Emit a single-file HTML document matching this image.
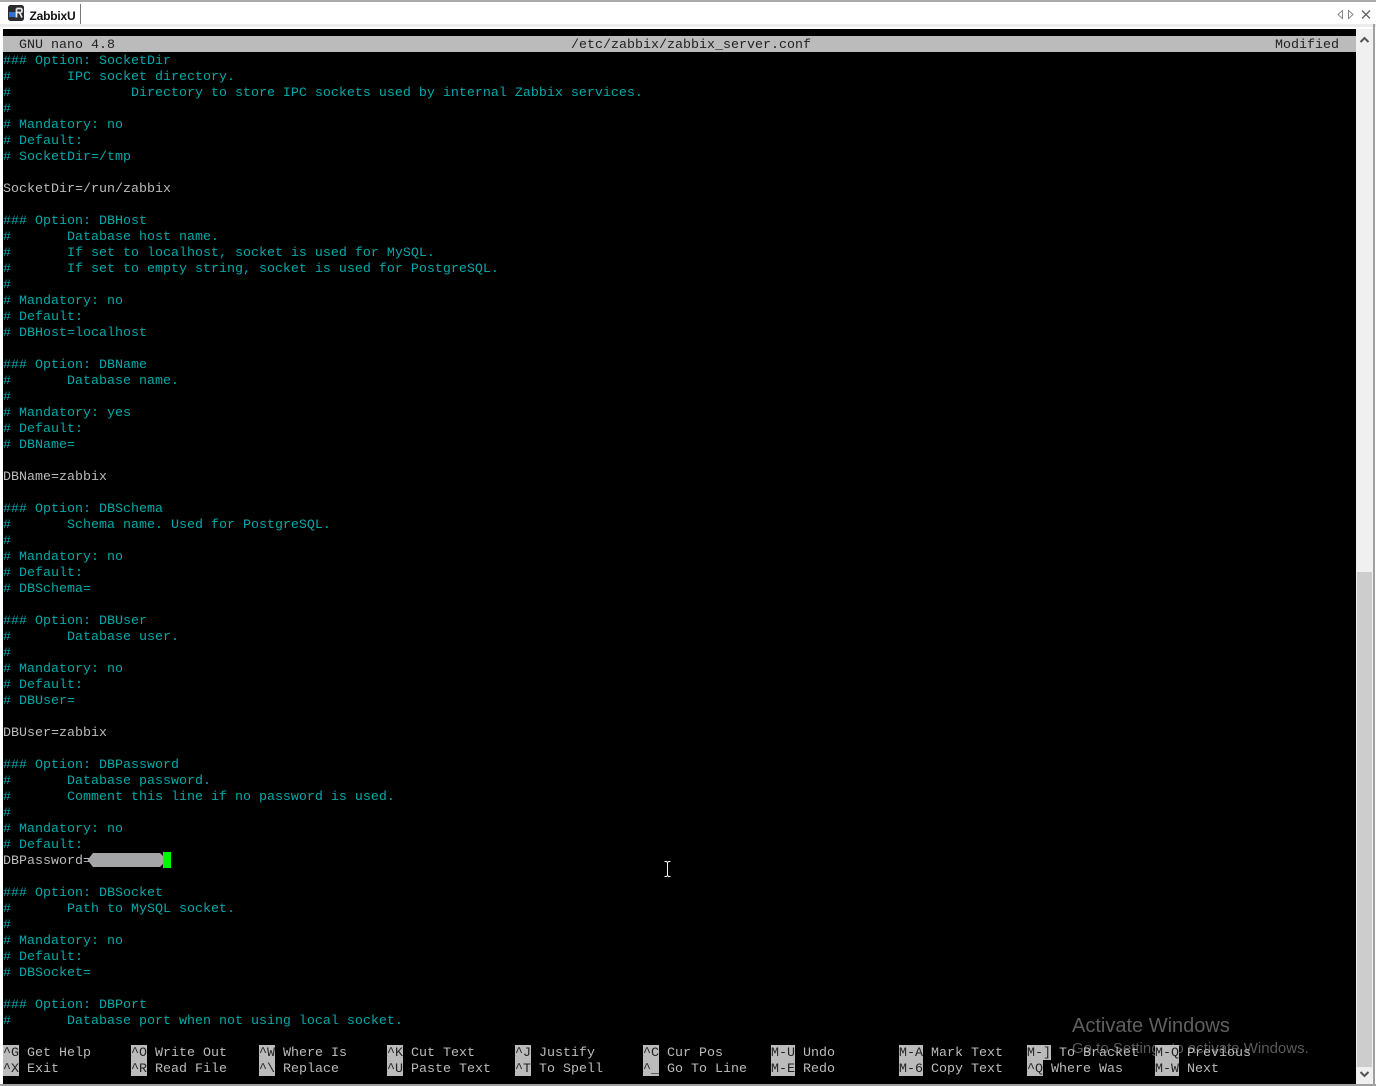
<!DOCTYPE html>
<html>
<head>
<meta charset="utf-8">
<style>
html,body{margin:0;padding:0;width:1376px;height:1086px;overflow:hidden;background:#fff}
body{position:relative;font-family:"Liberation Mono",monospace}
.a{position:absolute}
#term{position:absolute;left:3px;top:29px;width:1353px;height:1055px;background:#000}
#tb{position:absolute;left:3px;top:36px;width:1353px;height:16px;background:#bbb}
pre{position:absolute;margin:0;font:13.33px/16px "Liberation Mono",monospace;color:#bbb;white-space:pre}
.c{color:#00a8a8}
.tt{color:#222}
.k{position:absolute;background:#bbb;color:#222;height:16px;font:13.33px/20px "Liberation Mono",monospace;white-space:pre}
.l{position:absolute;height:16px;color:#bbb;font:13.33px/20px "Liberation Mono",monospace;white-space:pre}
.r1{height:15px;margin-top:1px;line-height:18px}
</style>
</head>
<body>
<div class="a" style="left:0;top:0;width:1376px;height:2px;background:#a9a9a9"></div>
<div class="a" style="left:0;top:24px;width:1376px;height:3px;background:#ececec"></div>
<div class="a" style="left:80px;top:4px;width:1px;height:20px;background:#777"></div>
<svg class="a" style="left:8px;top:5px" width="16" height="17" viewBox="0 0 16 17">
<rect x="0" y="0" width="16" height="16" rx="2.5" fill="#2c2c30"/>
<rect x="1" y="7" width="7" height="5" fill="#2f6fd0"/>
<path d="M8.5 3.5v9M8.5 3.500h4q1.500 0 1.500 2t-1.500 2h-4M11.500 7.500l2.500 5" fill="none" stroke="#e8e8e8" stroke-width="1.700"/>
</svg>
<div class="a" style="left:29.500px;top:8px;font:bold 12px/17px 'Liberation Sans',sans-serif;color:#111;letter-spacing:-.2px">ZabbixU</div>
<svg class="a" style="left:1334px;top:8px" width="40" height="13" viewBox="0 0 40 13">
<path d="M8.500 2.500L4 6.500L8.500 10.500Z" fill="none" stroke="#888" stroke-width="1"/>
<path d="M14.500 2.500L19 6.500L14.500 10.500Z" fill="none" stroke="#888" stroke-width="1"/>
<path d="M28 2.500L36 10.500M36 2.500L28 10.500" fill="none" stroke="#666" stroke-width="1.400"/>
</svg>

<div id="term"></div>
<div id="tb"></div>
<pre style="left:3px;top:38px" class="tt">  GNU nano 4.8</pre>
<pre style="left:571px;top:38px" class="tt">/etc/zabbix/zabbix_server.conf</pre>
<pre style="left:1275px;top:38px" class="tt">Modified</pre>

<pre style="left:3px;top:54px"><span class="c">### Option: SocketDir
#       IPC socket directory.
#               Directory to store IPC sockets used by internal Zabbix services.
#
# Mandatory: no
# Default:
# SocketDir=/tmp</span>

SocketDir=/run/zabbix

<span class="c">### Option: DBHost
#       Database host name.
#       If set to localhost, socket is used for MySQL.
#       If set to empty string, socket is used for PostgreSQL.
#
# Mandatory: no
# Default:
# DBHost=localhost

### Option: DBName
#       Database name.
#
# Mandatory: yes
# Default:
# DBName=</span>

DBName=zabbix

<span class="c">### Option: DBSchema
#       Schema name. Used for PostgreSQL.
#
# Mandatory: no
# Default:
# DBSchema=

### Option: DBUser
#       Database user.
#
# Mandatory: no
# Default:
# DBUser=</span>

DBUser=zabbix

<span class="c">### Option: DBPassword
#       Database password.
#       Comment this line if no password is used.
#
# Mandatory: no
# Default:</span>
DBPassword=

<span class="c">### Option: DBSocket
#       Path to MySQL socket.
#
# Mandatory: no
# Default:
# DBSocket=

### Option: DBPort
#       Database port when not using local socket.</span></pre>

<svg class="a" style="left:86px;top:852px" width="80" height="16" viewBox="0 0 80 16">
<path d="M1.500 8L7 1H74L79 6V10L74 15H7Z" fill="#a3a5a6"/>
</svg>
<div class="a" style="left:163px;top:852px;width:8px;height:16px;background:#00f800"></div>
<svg class="a" style="left:660px;top:859px" width="16" height="20" viewBox="0 0 16 20">
<path d="M4.500 2.500H6.500L7.500 3.500L8.500 2.500H10.500M7.500 3.500V16.500M4.500 17.500H6.500L7.500 16.500L8.500 17.500H10.500" fill="none" stroke="#f4f4f4" stroke-width="1"/>
</svg>

<div class="a" style="left:1072px;top:1014px;font:20px/24px 'Liberation Sans',sans-serif;color:#5f5f5f;white-space:nowrap">Activate Windows</div>
<div class="a" style="left:1072px;top:1040px;font:15px/18px 'Liberation Sans',sans-serif;color:#5a5a5a;white-space:nowrap">Go to Settings to activate Windows.</div>

<div class="k r1" style="left:3px;top:1044px">^G</div><div class="l" style="left:27px;top:1044px">Get Help</div>
<div class="k" style="left:3px;top:1060px">^X</div><div class="l" style="left:27px;top:1060px">Exit</div>
<div class="k r1" style="left:131px;top:1044px">^O</div><div class="l" style="left:155px;top:1044px">Write Out</div>
<div class="k" style="left:131px;top:1060px">^R</div><div class="l" style="left:155px;top:1060px">Read File</div>
<div class="k r1" style="left:259px;top:1044px">^W</div><div class="l" style="left:283px;top:1044px">Where Is</div>
<div class="k" style="left:259px;top:1060px">^\</div><div class="l" style="left:283px;top:1060px">Replace</div>
<div class="k r1" style="left:387px;top:1044px">^K</div><div class="l" style="left:411px;top:1044px">Cut Text</div>
<div class="k" style="left:387px;top:1060px">^U</div><div class="l" style="left:411px;top:1060px">Paste Text</div>
<div class="k r1" style="left:515px;top:1044px">^J</div><div class="l" style="left:539px;top:1044px">Justify</div>
<div class="k" style="left:515px;top:1060px">^T</div><div class="l" style="left:539px;top:1060px">To Spell</div>
<div class="k r1" style="left:643px;top:1044px">^C</div><div class="l" style="left:667px;top:1044px">Cur Pos</div>
<div class="k" style="left:643px;top:1060px">^_</div><div class="l" style="left:667px;top:1060px">Go To Line</div>
<div class="k r1" style="left:771px;top:1044px">M-U</div><div class="l" style="left:803px;top:1044px">Undo</div>
<div class="k" style="left:771px;top:1060px">M-E</div><div class="l" style="left:803px;top:1060px">Redo</div>
<div class="k r1" style="left:899px;top:1044px">M-A</div><div class="l" style="left:931px;top:1044px">Mark Text</div>
<div class="k" style="left:899px;top:1060px">M-6</div><div class="l" style="left:931px;top:1060px">Copy Text</div>
<div class="k r1" style="left:1027px;top:1044px">M-]</div><div class="l" style="left:1059px;top:1044px">To Bracket</div>
<div class="k" style="left:1027px;top:1060px">^Q</div><div class="l" style="left:1051px;top:1060px">Where Was</div>
<div class="k r1" style="left:1155px;top:1044px">M-Q</div><div class="l" style="left:1187px;top:1044px">Previous</div>
<div class="k" style="left:1155px;top:1060px">M-W</div><div class="l" style="left:1187px;top:1060px">Next</div>

<div class="a" style="left:1356px;top:29px;width:17px;height:1055px;background:#f0f0f0"></div>
<div class="a" style="left:1357px;top:572px;width:15px;height:495px;background:#cdcdcd"></div>
<svg class="a" style="left:1356px;top:31px" width="17" height="1053" viewBox="0 0 17 1053">
<path d="M4.500 11L8.500 7L12.500 11" fill="none" stroke="#555" stroke-width="2"/>
<path d="M4.500 1041L8.500 1045L12.500 1041" fill="none" stroke="#555" stroke-width="2"/>
</svg>
<div class="a" style="left:1373px;top:24px;width:2px;height:1062px;background:#a0a0a0"></div>
<div class="a" style="left:0;top:1084px;width:1376px;height:2px;background:#a0a0a0"></div>
</body>
</html>
